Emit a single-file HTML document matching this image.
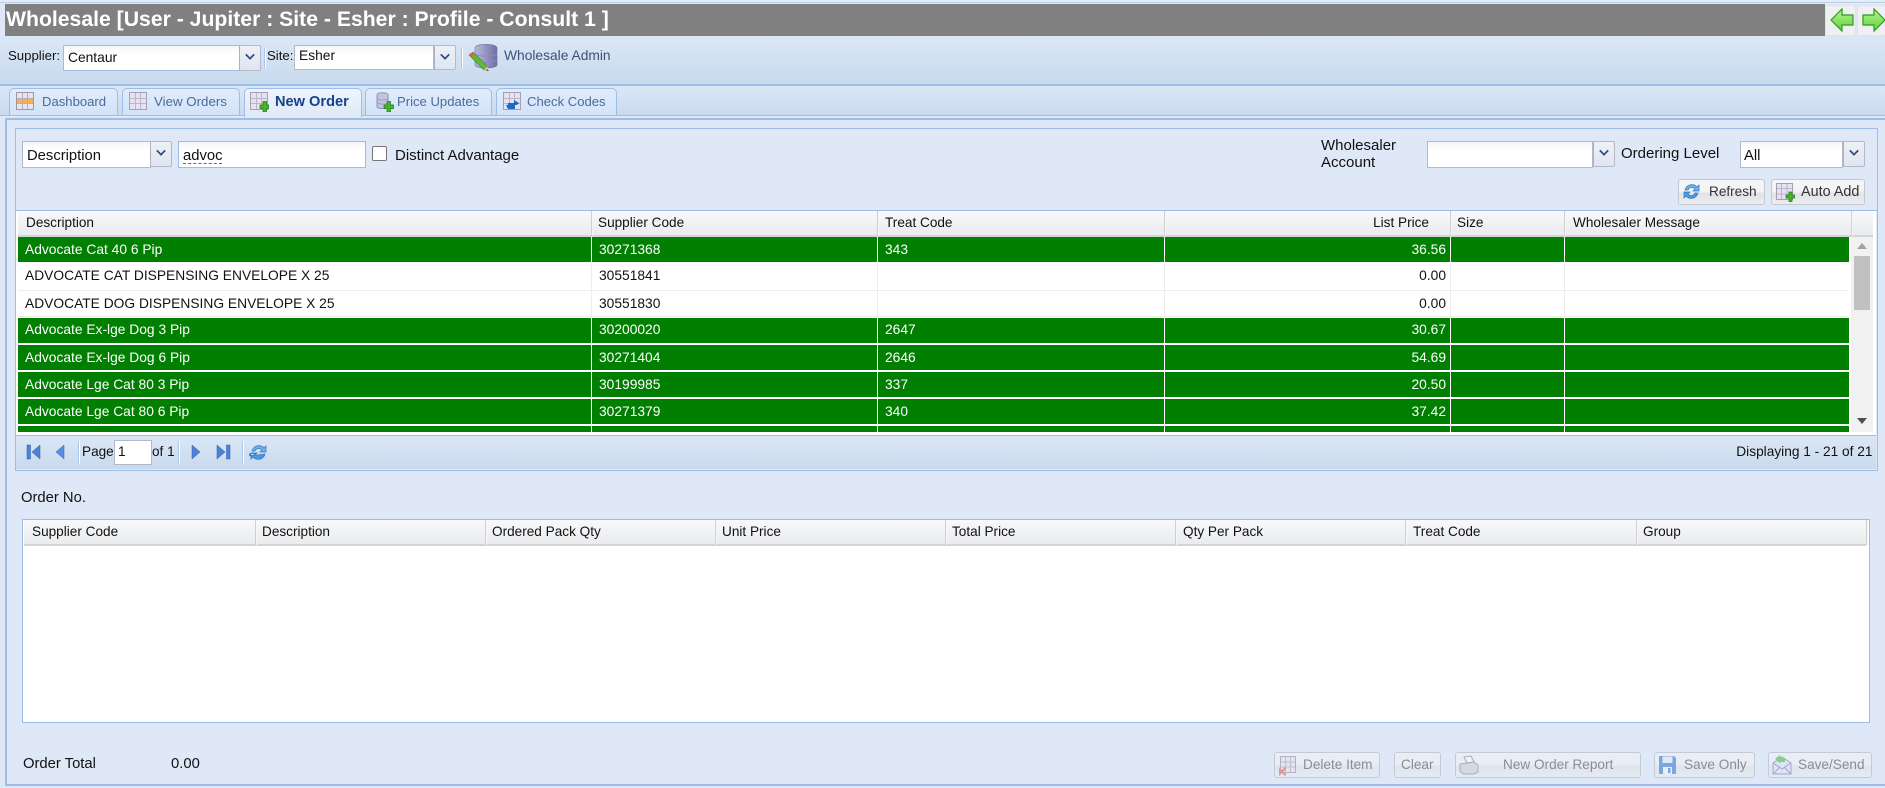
<!DOCTYPE html>
<html><head><meta charset="utf-8"><title>Wholesale</title>
<style>
html,body{margin:0;padding:0;width:1885px;height:788px;overflow:hidden;background:#dfe8f6}
body{position:relative;font-family:"Liberation Sans",sans-serif;font-size:13.6px;color:#111}
div,span.a,svg{position:absolute}
.t{position:absolute;white-space:nowrap;line-height:20px;height:20px}
.r{font-size:13.8px}
.f{font-size:14.8px}
.bar{background:linear-gradient(#dbe7f6,#c8daed)}
.tab{top:88px;height:27px;box-sizing:border-box;border:1px solid #9dbde6;border-bottom:none;border-radius:5px 5px 0 0;background:linear-gradient(#e0ecfb,#d3e3f8)}
.tl{top:92px;font-size:13.1px;color:#4d6a9c}
.inp{background:linear-gradient(#f4f5f6 0,#fff 8px);border:1px solid #b5b8c8;box-sizing:border-box}
.trg{box-sizing:border-box;border:1px solid #b5b8c8;border-left:1px solid #a9b2c4;background:linear-gradient(#eef1f6,#dfe6f0);height:26px;border-radius:0 2px 2px 0}
.trg:after{content:"";position:absolute;left:6px;top:5px;width:6px;height:6px;border-right:2.5px solid #2c4a82;border-bottom:2.5px solid #2c4a82;transform:rotate(45deg) scale(.85)}
.sep{width:1px;background:#a9c8ee;box-shadow:1px 0 0 #fff}
.btn{box-sizing:border-box;border:1px solid #c3c9d0;border-radius:3px;background:linear-gradient(#f5f6f7 0,#f2f3f4 48%,#dfe2e6 56%,#eceef0 100%)}
.hd{top:211px;height:24px;background:linear-gradient(#f9f9f9,#e9ebee);border-bottom:2px solid #d3d4d6;box-sizing:content-box}
.hs{top:211px;width:1px;height:25px;background:#d0d0d0;box-shadow:1px 0 0 #f6f6f6}
.g{left:18px;width:1831px;height:25px;background:#007f00}
.w{color:#fff}
.vw{width:1px;background:#fff;top:237px;height:195px}
.vl{width:1px;background:#ededed;top:264px;height:54px}
.oh{top:520px;height:24px;background:linear-gradient(#f9f9f9,#e9ebee);border-bottom:2px solid #d3d4d6}
.dis{opacity:.5}
</style></head><body>

<!-- top strip -->
<div style="left:0;top:0;width:1885px;height:4px;background:#e4ecf7"></div>
<div style="left:0;top:2px;width:1885px;height:1px;background:#b8cde6"></div>
<div style="left:0;top:4px;width:5px;height:32px;background:#dfe8f6"></div>
<div style="left:5px;top:4px;width:1820px;height:32px;background:#808080"></div>
<span class="t" style="left:6px;top:9px;line-height:22px;height:22px;font-size:21.2px;font-weight:bold;color:#fff">Wholesale [User - Jupiter : Site - Esher : Profile - Consult 1 ]</span>

<!-- arrows -->
<div class="btn" style="left:1825px;top:5px;width:31px;height:31px;background:#eff0f1;border-color:#dfe2e6;border-radius:2px"></div>
<div class="btn" style="left:1857px;top:5px;width:30px;height:31px;background:#eff0f1;border-color:#dfe2e6;border-radius:2px"></div>
<svg style="left:1830px;top:7px" width="24" height="26" viewBox="0 0 24 26"><defs><linearGradient id="ag" x1="0" y1="0" x2="0" y2="1"><stop offset="0" stop-color="#b4f58c"/><stop offset="1" stop-color="#5fd13c"/></linearGradient></defs><path d="M1 13 12 2v6h11v10H12v6z" fill="url(#ag)" stroke="#2f9a22" stroke-width="1.2"/></svg>
<svg style="left:1862px;top:7px" width="24" height="26" viewBox="0 0 24 26"><path d="M23 13 12 2v6H1v10h11v6z" fill="url(#ag)" stroke="#2f9a22" stroke-width="1.2"/></svg>

<!-- toolbar -->
<div class="bar" style="left:0;top:36px;width:1885px;height:48px"></div>
<div style="left:0;top:84px;width:1885px;height:2px;background:#a0bfe6"></div>
<span class="t" style="left:8px;top:46px;font-size:13.2px">Supplier:</span>
<div class="inp" style="left:63px;top:45px;width:177px;height:26px;border-color:#9dbde6"></div>
<span class="t" style="left:68px;top:48px;font-size:13.8px">Centaur</span>
<div class="trg" style="left:239px;top:45px;width:22px"></div>
<div class="sep" style="left:264px;top:48px;height:20px"></div>
<span class="t" style="left:267px;top:46px;font-size:13.2px">Site:</span>
<div class="inp" style="left:294px;top:45px;width:140px;height:25px"></div>
<span class="t" style="left:299px;top:46px;font-size:13.8px">Esher</span>
<div class="trg" style="left:434px;top:45px;width:22px;height:25px"></div>
<div class="sep" style="left:461px;top:48px;height:20px"></div>
<svg style="left:467px;top:43px" width="31" height="29" viewBox="0 0 31 29"><defs><linearGradient id="db" x1="0" x2="1" y1="0" y2="0"><stop offset="0" stop-color="#b9b9dc"/><stop offset="1" stop-color="#6f6fa6"/></linearGradient></defs><path d="M8 5c0-5 22-5 22 0v17c0 4-22 4-22 0z" fill="url(#db)" stroke="#6d6d9e" stroke-width=".6"/><path d="M8 11c5 3 17 3 22 0M8 17c5 3 17 3 22 0" stroke="#8c8cbc" fill="none"/><path d="M2 12 6 9 20 23 17 27z" fill="#62b838" stroke="#3c8a20" stroke-width=".6"/><path d="M2 12 6 9 8 11 4 14z" fill="#e85c48"/><path d="M17 27 20 23 22 28z" fill="#e9b98a"/><path d="M20 26.2 22 28l-3-.4z" fill="#444"/></svg>
<span class="t" style="left:504px;top:46px;font-size:13.8px;color:#3f5277">Wholesale Admin</span>

<!-- tab strip -->
<div class="bar" style="left:0;top:86px;width:1885px;height:30px"></div>
<div style="left:0;top:115px;width:1885px;height:1px;background:#a0bfe6"></div>
<div style="left:0;top:116px;width:5px;height:672px;background:#dfe8f6"></div>
<div style="left:5px;top:116px;width:1880px;height:2px;background:#dfe8f6"></div>
<div style="left:5px;top:118px;width:1880px;height:2px;background:#9dbde6"></div>
<div style="left:5px;top:118px;width:2px;height:668px;background:#9dbde6"></div>
<div style="left:5px;top:784px;width:1880px;height:2px;background:#9dbde6"></div>

<div class="tab" style="left:9px;width:109px"></div>
<div class="tab" style="left:122px;width:118px"></div>
<div class="tab" style="left:244px;width:118px;height:29px;background:linear-gradient(#eef5fe,#dfe8f6)"></div>
<div class="tab" style="left:365px;width:127px"></div>
<div class="tab" style="left:496px;width:121px"></div>

<svg style="left:16px;top:92px" width="18" height="18" viewBox="0 0 18 18"><rect x=".5" y=".5" width="17" height="17" fill="#e8e4ee" stroke="#9d98a4"/><rect x="1" y="6" width="16" height="6" fill="#f8b04a"/><path d="M6.500 1v16M11.500 1v16M1 6.500h16M1 11.500h16" stroke="#b4aebc"/></svg>
<span class="t tl" style="left:42px">Dashboard</span>
<svg style="left:129px;top:92px" width="18" height="18" viewBox="0 0 18 18"><rect x=".5" y=".5" width="17" height="17" fill="#e6e2f4" stroke="#a5a0b0"/><path d="M6.500 1v16M11.500 1v16M1 6.500h16M1 11.500h16" stroke="#bcb7c6"/></svg>
<span class="t tl" style="left:154px;font-size:13.3px">View Orders</span>
<svg style="left:250px;top:92px" width="19" height="20" viewBox="0 0 19 20"><rect x=".5" y=".5" width="17" height="17" fill="#e6e2f4" stroke="#a5a0b0"/><path d="M6.500 1v16M11.500 1v16M1 6.500h16M1 11.500h16" stroke="#bcb7c6"/><path d="M10 13h3V9.500h3.500V13H19v3.500h-2.500V20H13v-3.500h-3z" fill="#45b52a" stroke="#1f7a14" stroke-width=".7"/></svg>
<span class="t tl" style="left:275px;font-weight:bold;color:#15428b;font-size:14.6px">New Order</span>
<svg style="left:375px;top:92px" width="19" height="20" viewBox="0 0 19 20"><path d="M2 3c0-3 11-3 11 0v12c0 2-11 2-11 0z" fill="#c4c4e0" stroke="#9090b6"/><path d="M2 7c3 1.500 8 1.500 11 0M2 11c3 1.500 8 1.500 11 0" stroke="#a0a0c4" fill="none"/><path d="M9 13h3V9.500h3.500V13H19v3.500h-3.500V20H12v-3.500H9z" fill="#45b52a" stroke="#1f7a14" stroke-width=".7"/></svg>
<span class="t tl" style="left:397px">Price Updates</span>
<svg style="left:503px;top:92px" width="18" height="18" viewBox="0 0 18 18"><rect x=".5" y=".5" width="17" height="17" fill="#e6e2f4" stroke="#a5a0b0"/><path d="M6.500 1v16M11.500 1v16M1 6.500h16M1 11.500h16" stroke="#bcb7c6"/><path d="M5 11h6V8l5 3-2 2H5zM3 13h9v4H5z" fill="#1d68c4"/></svg>
<span class="t tl" style="left:527px">Check Codes</span>

<!-- upper panel -->
<div style="left:15px;top:128px;width:1861px;height:341px;border:1px solid #9dbde6;background:#dfe8f6"></div>
<div class="inp" style="left:22px;top:141px;width:129px;height:27px"></div>
<span class="t f" style="left:27px;top:146px">Description</span>
<div class="trg" style="left:150px;top:141px;width:22px"></div>
<div class="inp" style="left:178px;top:141px;width:188px;height:27px;border-color:#9dbde6"></div>
<span class="t f" style="left:183px;top:146px">advoc</span>
<div style="left:183px;top:163px;width:39px;height:0;border-top:1px dashed #e03030"></div>
<div style="left:372px;top:146px;width:13px;height:13px;border:1px solid #767676;border-radius:2px;background:#fff"></div>
<span class="t f" style="left:395px;top:146px;font-size:15px">Distinct Advantage</span>

<span class="t f" style="left:1321px;top:136px;font-size:15px">Wholesaler</span>
<span class="t f" style="left:1321px;top:153px;font-size:15px">Account</span>
<div class="inp" style="left:1427px;top:141px;width:166px;height:27px"></div>
<div class="trg" style="left:1593px;top:141px;width:22px"></div>
<span class="t f" style="left:1621px;top:144px;font-size:15px">Ordering Level</span>
<div class="inp" style="left:1740px;top:141px;width:103px;height:27px"></div>
<span class="t f" style="left:1744px;top:146px">All</span>
<div class="trg" style="left:1843px;top:141px;width:22px"></div>

<div class="btn" style="left:1678px;top:179px;width:87px;height:26px"></div>
<svg style="left:1682px;top:182px" width="19" height="19" viewBox="0 0 19 19"><path d="M3 8a7 7 0 0 1 12-3l2-2v6h-6l2-2a4 4 0 0 0-7 1z" fill="#6fb1ea" stroke="#2f78c4" stroke-width=".7"/><path d="M16 11a7 7 0 0 1-12 3l-2 2v-6h6l-2 2a4 4 0 0 0 7-1z" fill="#4f97de" stroke="#2f78c4" stroke-width=".7"/></svg>
<span class="t" style="left:1709px;top:182px;color:#333">Refresh</span>
<div class="btn" style="left:1771px;top:179px;width:94px;height:26px"></div>
<svg style="left:1776px;top:183px" width="19" height="19" viewBox="0 0 19 19"><rect x=".5" y=".5" width="16" height="16" fill="#e6e2f4" stroke="#a5a0b0"/><path d="M5.500 1v15M11 1v15M1 5.500h15M1 11h15" stroke="#bcb7c6"/><path d="M10 12h3V9h3v3h3v3h-3v4h-3v-4h-3z" fill="#45b52a" stroke="#1f7a14" stroke-width=".7"/></svg>
<span class="t" style="left:1801px;top:182px;color:#333;font-size:14.4px">Auto Add</span>

<!-- grid -->
<div style="left:15px;top:210px;width:1862px;height:1px;background:#9dbde6"></div>
<div style="left:16px;top:211px;width:1860px;height:224px;background:#fff"></div>
<div class="hd" style="left:18px;width:1855px"></div>
<div class="hs" style="left:591px"></div><div class="hs" style="left:877px"></div><div class="hs" style="left:1164px"></div><div class="hs" style="left:1450px"></div><div class="hs" style="left:1564px"></div><div class="hs" style="left:1851px"></div>
<span class="t" style="left:26px;top:213px">Description</span>
<span class="t" style="left:598px;top:213px">Supplier Code</span>
<span class="t" style="left:885px;top:213px">Treat Code</span>
<span class="t" style="right:456px;top:213px">List Price</span>
<span class="t" style="left:1457px;top:213px">Size</span>
<span class="t" style="left:1573px;top:213px">Wholesaler Message</span>

<div class="g" style="top:237px"></div>
<div class="g" style="top:318px"></div>
<div class="g" style="top:345px"></div>
<div class="g" style="top:372px"></div>
<div class="g" style="top:399px"></div>
<div class="g" style="top:426px;height:6px"></div>
<div style="left:18px;top:290px;width:1831px;height:1px;background:#ededed"></div>
<div style="left:18px;top:316px;width:1831px;height:1px;background:#ededed"></div>
<div class="vw" style="left:591px"></div><div class="vw" style="left:877px"></div><div class="vw" style="left:1164px"></div><div class="vw" style="left:1450px"></div><div class="vw" style="left:1564px"></div>
<div class="vl" style="left:591px"></div><div class="vl" style="left:877px"></div><div class="vl" style="left:1164px"></div><div class="vl" style="left:1450px"></div><div class="vl" style="left:1564px"></div>

<span class="t r w" style="left:25px;top:240px">Advocate Cat 40 6 Pip</span><span class="t r w" style="left:599px;top:240px">30271368</span><span class="t r w" style="left:885px;top:240px">343</span><span class="t r w" style="right:439px;top:240px">36.56</span>
<span class="t r" style="left:25px;top:266px">ADVOCATE CAT DISPENSING ENVELOPE X 25</span><span class="t r" style="left:599px;top:266px">30551841</span><span class="t r" style="right:439px;top:266px">0.00</span>
<span class="t r" style="left:25px;top:294px">ADVOCATE DOG DISPENSING ENVELOPE X 25</span><span class="t r" style="left:599px;top:294px">30551830</span><span class="t r" style="right:439px;top:294px">0.00</span>
<span class="t r w" style="left:25px;top:320px">Advocate Ex-lge Dog 3 Pip</span><span class="t r w" style="left:599px;top:320px">30200020</span><span class="t r w" style="left:885px;top:320px">2647</span><span class="t r w" style="right:439px;top:320px">30.67</span>
<span class="t r w" style="left:25px;top:348px">Advocate Ex-lge Dog 6 Pip</span><span class="t r w" style="left:599px;top:348px">30271404</span><span class="t r w" style="left:885px;top:348px">2646</span><span class="t r w" style="right:439px;top:348px">54.69</span>
<span class="t r w" style="left:25px;top:375px">Advocate Lge Cat 80 3 Pip</span><span class="t r w" style="left:599px;top:375px">30199985</span><span class="t r w" style="left:885px;top:375px">337</span><span class="t r w" style="right:439px;top:375px">20.50</span>
<span class="t r w" style="left:25px;top:402px">Advocate Lge Cat 80 6 Pip</span><span class="t r w" style="left:599px;top:402px">30271379</span><span class="t r w" style="left:885px;top:402px">340</span><span class="t r w" style="right:439px;top:402px">37.42</span>

<!-- scrollbar -->
<div style="left:1851px;top:237px;width:22px;height:195px;background:#f1f1f1"></div>
<div style="left:1854px;top:256px;width:16px;height:54px;background:#c1c1c1"></div>
<div style="left:1857px;top:243px;width:0;height:0;border:5px solid transparent;border-bottom:6px solid #a3a3a3;border-top:0"></div>
<div style="left:1857px;top:418px;width:0;height:0;border:5px solid transparent;border-top:6px solid #505050;border-bottom:0"></div>

<!-- paging -->
<div style="left:16px;top:435px;width:1860px;height:1px;background:#9dbde6"></div>
<div class="bar" style="left:16px;top:436px;width:1860px;height:33px"></div>
<svg style="left:26px;top:444px" width="15" height="16" viewBox="0 0 15 16"><rect x="1" y="1" width="3.500" height="14" fill="#4f82d6" stroke="#2d5cab" stroke-width=".5"/><path d="M14 1v14L6 8z" fill="#4f82d6" stroke="#2d5cab" stroke-width=".5"/></svg>
<svg style="left:55px;top:444px" width="10" height="16" viewBox="0 0 10 16"><path d="M9 1v14L1 8z" fill="#5b8cdc" stroke="#3a68b8" stroke-width=".5"/></svg>
<div class="sep" style="left:78px;top:441px;height:23px"></div>
<span class="t" style="left:82px;top:442px">Page</span>
<div style="left:114px;top:440px;width:36px;height:23px;background:#fff;border:1px solid #b5b8c8"></div>
<span class="t" style="left:118px;top:442px">1</span>
<span class="t" style="left:152px;top:442px">of 1</span>
<div class="sep" style="left:178px;top:441px;height:23px"></div>
<svg style="left:191px;top:444px" width="10" height="16" viewBox="0 0 10 16"><path d="M1 1v14L9 8z" fill="#4f82d6" stroke="#2d5cab" stroke-width=".5"/></svg>
<svg style="left:216px;top:444px" width="15" height="16" viewBox="0 0 15 16"><path d="M1 1v14L9 8z" fill="#4f82d6" stroke="#2d5cab" stroke-width=".5"/><rect x="10.500" y="1" width="3.500" height="14" fill="#4f82d6" stroke="#2d5cab" stroke-width=".5"/></svg>
<div class="sep" style="left:242px;top:441px;height:23px"></div>
<svg style="left:249px;top:443px" width="19" height="19" viewBox="0 0 19 19"><path d="M3 8a7 7 0 0 1 12-3l2-2v6h-6l2-2a4 4 0 0 0-7 1z" fill="#6fb1ea" stroke="#2f78c4" stroke-width=".7"/><path d="M16 11a7 7 0 0 1-12 3l-2 2v-6h6l-2 2a4 4 0 0 0-7 1z" fill="#4f97de" stroke="#2f78c4" stroke-width=".7"/></svg>
<span class="t" style="right:12.500px;top:442px;font-size:13.7px">Displaying 1 - 21 of 21</span>

<!-- order -->
<span class="t f" style="left:21px;top:488px">Order No.</span>
<div style="left:22px;top:519px;width:1846px;height:202px;background:#fff;border:1px solid #9dbde6"></div>
<div class="oh" style="left:24px;width:1842px"></div>
<div class="hs" style="left:255px;top:520px"></div><div class="hs" style="left:485px;top:520px"></div><div class="hs" style="left:715px;top:520px"></div><div class="hs" style="left:945px;top:520px"></div><div class="hs" style="left:1175px;top:520px"></div><div class="hs" style="left:1405px;top:520px"></div><div class="hs" style="left:1636px;top:520px"></div><div class="hs" style="left:1866px;top:520px"></div>
<span class="t" style="left:32px;top:522px">Supplier Code</span>
<span class="t" style="left:262px;top:522px">Description</span>
<span class="t" style="left:492px;top:522px">Ordered Pack Qty</span>
<span class="t" style="left:722px;top:522px">Unit Price</span>
<span class="t" style="left:952px;top:522px">Total Price</span>
<span class="t" style="left:1183px;top:522px">Qty Per Pack</span>
<span class="t" style="left:1413px;top:522px">Treat Code</span>
<span class="t" style="left:1643px;top:522px">Group</span>

<span class="t f" style="left:23px;top:754px">Order Total</span>
<span class="t f" style="left:171px;top:754px">0.00</span>

<!-- disabled buttons -->
<div class="dis" style="left:0;top:0;width:1885px;height:788px">
<div class="btn" style="left:1274px;top:752px;width:106px;height:26px;border-color:#a9b0b8"></div>
<svg style="left:1278px;top:756px" width="19" height="20" viewBox="0 0 19 20"><rect x="2.500" y=".5" width="15" height="16" fill="#e6e2f4" stroke="#857f90"/><path d="M7.500 1v15M12.500 1v15M3 6h14M3 11h14" stroke="#9a95a6"/><path d="M1 11l3 3 3-3 1.500 1.500-3 3 3 3L7 20l-3-3-3 3z" fill="#e0462a"/></svg>
<span class="t" style="left:1303px;top:755px;color:#333">Delete Item</span>
<div class="btn" style="left:1394px;top:752px;width:47px;height:26px;border-color:#a9b0b8"></div>
<span class="t" style="left:1401px;top:755px;color:#333">Clear</span>
<div class="btn" style="left:1455px;top:752px;width:186px;height:26px;border-color:#a9b0b8"></div>
<svg style="left:1458px;top:755px" width="22" height="21" viewBox="0 0 22 21"><path d="M6 2l7-1 3 6-7 1z" fill="#fff" stroke="#777"/><path d="M2 9l14-2 4 3v7l-4 2H5l-3-3z" fill="#c9ccd2" stroke="#777"/></svg>
<span class="t" style="left:1503px;top:755px;color:#333">New Order Report</span>
<div class="btn" style="left:1654px;top:752px;width:101px;height:26px;border-color:#a9b0b8"></div>
<svg style="left:1658px;top:755px" width="19" height="20" viewBox="0 0 19 20"><path d="M1 1h15l2 2v16H1z" fill="#1d68c4"/><rect x="4.500" y="1.500" width="10" height="6.500" fill="#dfe8f6"/><rect x="5" y="12" width="9" height="7" fill="#f1f4f8"/><rect x="10" y="13" width="2.500" height="5" fill="#1d68c4"/></svg>
<span class="t" style="left:1684px;top:755px;color:#333">Save Only</span>
<div class="btn" style="left:1768px;top:752px;width:104px;height:26px;border-color:#a9b0b8"></div>
<svg style="left:1772px;top:754px" width="20" height="21" viewBox="0 0 20 21"><path d="M1 9 10 3l9 6v11H1z" fill="#dfe0f5" stroke="#6767a8"/><path d="M1 9l9 6 9-6M1 20l7-7M19 20l-7-7" stroke="#6767a8" fill="none"/><path d="M3 5l5-4 1 3h4v4H8l1 2z" fill="#38b52a"/></svg>
<span class="t" style="left:1798px;top:755px;color:#333">Save/Send</span>
</div>
</body></html>
